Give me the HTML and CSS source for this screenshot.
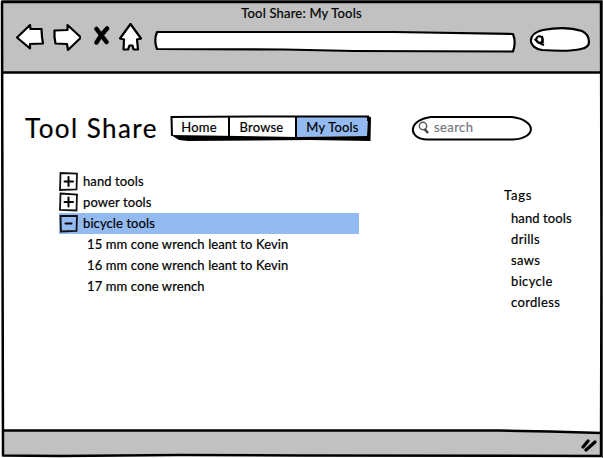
FILE: index.html
```html
<!DOCTYPE html>
<html lang="en">
<head>
<meta charset="utf-8">
<title>Tool Share: My Tools</title>
<link rel="stylesheet" href="styles.css">
</head>
<body>
<div class="window">
  <svg class="frame" viewBox="0 0 603 458" aria-hidden="true">
    <path class="chrome" d="M2 2H601V73H3Z"/>
    <path class="chrome" d="M3 430.500L500 430.500L601 433V456L3 455.500Z"/>
    <path class="edge" d="M2 2L601 2L601.500 260L601 456L300 455.500L180 455L60 456L3 455.500L2.500 240Z"/>
    <path class="edge" d="M3 72.500H601M3 430.500L500 430.500L550 431.500L601 433"/>
    <path class="shade" d="M1.500 .5H602.500V458"/>
  </svg>
  <header class="toolbar">
    <div class="caption">Tool Share: My Tools</div>
    <div class="controls">
      <svg class="nav-icon back" viewBox="0 0 28 28"><path class="shape" d="M1 14.500L14 2L14.500 6L25.500 6L26 14L27 20.500L14 21L14 25.500Z"/></svg>
      <svg class="nav-icon forward" viewBox="0 0 28 28"><path class="shape" d="M1.500 7.500L14.500 7V2L28 14.500L15 27L14 21L2.500 20.500L1.500 14Z"/></svg>
      <svg class="nav-icon stop" viewBox="0 0 17 28"><path d="M3.500 6L13.500 19M14 5.500C10 10 7 13 3.500 19.500" fill="none" stroke="#000" stroke-width="4.500" stroke-linecap="round"/></svg>
      <svg class="nav-icon home" viewBox="0 0 23 28"><path class="shape" d="M11.500 1L22 15.500L18 16.500L19 26.500H14.500L13.500 22.500H10.500L9 26.500L4.500 26.500L5 16.500L1 15.500Z"/></svg>
      <svg class="address" viewBox="0 0 362 24"><path class="shape" d="M3 3L140 3L240 3L359 5C361 10 361 17 359 22.500L200 22L130 20.500L3 20C1 15 1 8 3 3Z"/></svg>
      <svg class="lookup" viewBox="0 0 62 28"><path class="shape" d="M14 4C27 1.500 42 1.500 53 5C59 8 60 13 60 16C60 20 58 22 52 23C42 25.500 27 25 13 24C-1 22-3 8 14 4Z"/><circle cx="10.500" cy="13.500" r="3.200" fill="none" stroke="#000" stroke-width="2"/><path d="M5.500 13L10 17L15 19M13 10L14 17" fill="none" stroke="#000" stroke-width="2"/></svg>
    </div>
  </header>
  <main class="page">
    <div class="masthead">
      <h1 class="brand">Tool Share</h1>
      <nav class="tabs">
        <svg class="tabs-outline" viewBox="0 0 202 27" aria-hidden="true"><path fill="#fff" d="M2 2H126V21H3Z"/><path fill="#94baf2" d="M126 2H198L197 21L126 22Z"/><path fill="#000" d="M1 20L126 22L197 21L198 1.500L201 2L200.500 26L140 25L18 26L9 25Z"/><path d="M2 21L1.500 2L100 1.500L198 1.500V6M59 2V22M126 2V22" fill="none" stroke="#000" stroke-width="2"/></svg>
        <a class="tab tab-home">Home</a><a class="tab tab-browse">Browse</a><a class="tab tab-tools">My Tools</a>
      </nav>
      <div class="search">
        <svg class="search-outline" viewBox="0 0 122 27" aria-hidden="true"><path d="M20 2L101 2C125 5 127 23 102 24.500L16 24.500C-3 24-4 5 20 2Z" fill="#fff" stroke="#000" stroke-width="2"/></svg>
        <svg class="lens" viewBox="0 0 12 14"><circle cx="5" cy="5" r="3.700" fill="#fff" stroke="#555" stroke-width="1.400"/><path d="M6.500 8L10 12" stroke="#444" stroke-width="2.500"/></svg>
        <span class="hint">search</span>
      </div>
    </div>
    <div class="content">
      <ul class="tree">
        <li class="row"><svg class="toggle" viewBox="0 0 20 21"><path class="box" d="M1.500 2L18 2.500L17.500 18.500L1 19Z"/><path class="sign" d="M5.500 10.500H14M9.500 6V15"/></svg>hand tools</li>
        <li class="row"><svg class="toggle" viewBox="0 0 20 21"><path class="box" d="M1.500 1.500L18 2.500L17.500 18.500L1 18Z"/><path class="sign" d="M5.500 10H14M9.500 5.500V14.500"/></svg>power tools</li>
        <li class="row selected"><svg class="toggle" viewBox="0 0 20 21"><path class="box" d="M1.500 3L18 3L17.500 18L2 18.500Z"/><path class="sign" d="M6.500 10.500H12.500"/></svg>bicycle tools</li>
        <li class="row leaf">15 mm cone wrench leant to Kevin</li>
        <li class="row leaf">16 mm cone wrench leant to Kevin</li>
        <li class="row leaf">17 mm cone wrench</li>
      </ul>
      <aside class="tags">
        <h2 class="tags-title">Tags</h2>
        <ul class="tag-list"><li class="tag-long">hand tools</li><li>drills</li><li>saws</li><li>bicycle</li><li>cordless</li></ul>
      </aside>
    </div>
  </main>
  <footer class="status"><svg class="grip" viewBox="0 0 18 14"><path d="M3 9L8 3M6 12L15 4" stroke="#000" stroke-width="3.300" stroke-linecap="round"/></svg></footer>
</div>
</body>
</html>
```
FILE: styles.css
```css
* { box-sizing: border-box; }
body { margin: 0; background: #fff; color: #000; font: 13px/21px Lato, "Open Sans", sans-serif; letter-spacing: .2px; -webkit-text-stroke: .2px currentColor; overflow: hidden; }
ul { list-style: none; margin: 0; padding: 0; }
h1, h2 { margin: 0; font-weight: 400; }
svg { display: block; flex: none; }
.window { position: relative; isolation: isolate; width: 603px; height: 458px; display: flex; flex-direction: column; }
.frame { position: absolute; inset: 0; width: 603px; height: 458px; z-index: -1; }
.chrome { fill: #c1c1c1; }
.edge { fill: none; stroke: #000; stroke-width: 2.5; stroke-linejoin: round; }
.shade { fill: none; stroke: #444; stroke-width: 1; }
.shape { fill: #fff; stroke: #000; stroke-width: 2.2; stroke-linejoin: round; }
.toolbar { height: 73px; }
.caption { padding-top: 3px; height: 23px; text-align: center; }
.controls { display: flex; padding-left: 16px; }
.nav-icon { height: 28px; }
.back { width: 28px; }
.forward { width: 28px; margin-left: 9px; }
.stop { width: 17px; margin-left: 12px; }
.home { width: 23px; margin-left: 9px; }
.address { width: 362px; height: 24px; margin: 6px 0 0 12px; }
.lookup { width: 62px; height: 28px; margin: 3px 0 0 13px; }
.page { height: 358px; }
.masthead { display: flex; height: 98px; padding: 42px 0 0 25px; }
.brand { width: 145px; font-size: 26px; line-height: 26px; letter-spacing: 1.45px; white-space: nowrap; }
.tabs { position: relative; display: flex; width: 202px; height: 27px; }
.tabs-outline, .search-outline { position: absolute; inset: 0; width: 100%; height: 100%; z-index: -1; }
.tab { text-align: center; line-height: 25px; }
.tab-home { width: 58px; }
.tab-browse { width: 67px; }
.tab-tools { width: 75px; }
.search { position: relative; display: flex; width: 122px; height: 27px; margin-left: 39px; padding-left: 7px; color: #76767e; }
.lens { width: 12px; height: 14px; margin-top: 6px; }
.hint { margin-left: 4px; line-height: 25px; letter-spacing: .4px; }
.content { display: flex; }
.tree { width: 300px; margin-left: 59px; letter-spacing: .1px; }
.row { display: flex; height: 21px; align-items: center; white-space: nowrap; }
.selected { background: #94baf2; }
.toggle { width: 20px; height: 21px; margin-right: 4px; }
.box { fill: none; stroke: #111; stroke-width: 1.8; }
.sign { fill: none; stroke: #000; stroke-width: 2; stroke-linecap: round; }
.leaf { padding-left: 28px; }
.tags { margin: 14px 0 0 145px; }
.tags-title { font-size: 13px; line-height: 21px; letter-spacing: .8px; }
.tag-list { margin-top: 2px; padding-left: 7px; letter-spacing: .35px; }
.tag-long { letter-spacing: .1px; }
.status { height: 27px; display: flex; justify-content: flex-end; padding: 7px 5px 0 0; }
.grip { width: 18px; height: 14px; }
```
